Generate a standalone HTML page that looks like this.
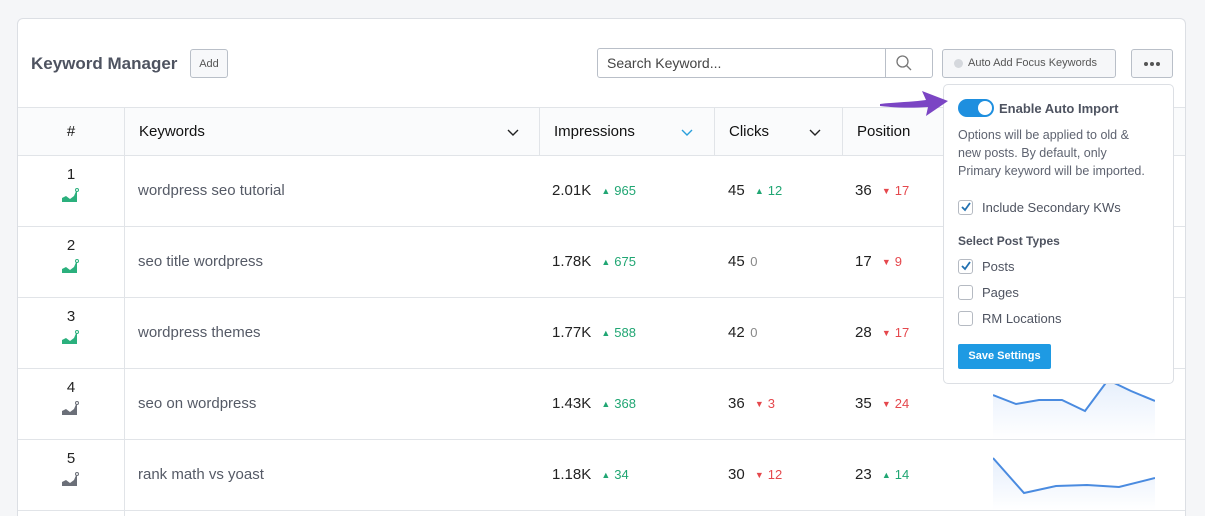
<!DOCTYPE html>
<html style="width:1205px;height:516px;overflow:hidden"><head><style>
*{box-sizing:border-box;margin:0;padding:0}
body{width:1205px;height:516px;overflow:hidden;background:#f5f6f8;font-family:"Liberation Sans",sans-serif;position:relative;color:#222}
.card{position:absolute;left:17px;top:18px;width:1169px;height:498px;background:#fff;border:1px solid #dcdfe4;border-bottom:none;border-radius:6px 6px 0 0;overflow:hidden}
.a{position:absolute}
.hl{position:absolute;left:0;right:0;height:1px;background:#e1e4e8}
.vl{position:absolute;width:1px;background:#e1e4e8}
.th{position:absolute;height:48px;line-height:48px;font-size:15px;color:#111}
.num{position:absolute;width:106px;text-align:center;font-size:15px;color:#222}
.kw{position:absolute;left:120px;font-size:15px;color:#555a66}
.v{position:absolute;font-size:15px;color:#222}
.up{color:#20a673;font-size:13px;margin-left:6px}
.up i,.dn i{font-style:normal;font-size:9px;margin-right:4px;vertical-align:1px}
.dn{color:#e5484d;font-size:13px;margin-left:6px}
.z{color:#888;font-size:13px;margin-left:2px}
.cb{position:absolute;left:14px;width:15px;height:15px;border:1px solid #b5bac2;border-radius:3px;background:#fff}
.pt{position:absolute;left:38px;font-size:13px;color:#4e5360}
</style></head><body>
<div class="card">
 <div class="a" style="left:13px;top:35px;font-size:17px;font-weight:bold;color:#4e5360">Keyword Manager</div>
 <div class="a" style="left:172px;top:30px;width:38px;height:29px;border:1px solid #b9bfc8;border-radius:3px;background:#f7f8fa;font-size:11px;color:#555;text-align:center;line-height:29px">Add</div>
 <div class="a" style="left:579px;top:29px;width:336px;height:30px;border:1px solid #b9bfc8;border-radius:3px;font-size:14px;color:#444;line-height:28px;padding-left:9px">Search Keyword...</div>
 <div class="vl" style="left:867px;top:30px;height:28px;background:#b9bfc8"></div>
 <svg class="a" style="left:877px;top:35px" width="18" height="18" viewBox="0 0 18 18"><circle cx="7.5" cy="7.5" r="5.5" fill="none" stroke="#777" stroke-width="1.3"/><path d="M11.5 11.5L16 16" stroke="#777" stroke-width="1.3"/></svg>
 <div class="a" style="left:924px;top:30px;width:174px;height:29px;border:1px solid #b9bfc8;border-radius:3px;background:#f6f7f9;font-size:11px;color:#555;line-height:27px;padding-left:25px">Auto Add Focus Keywords</div>
 <div class="a" style="left:936px;top:40px;width:9px;height:9px;border-radius:50%;background:#d5d8dd"></div>
 <div class="a" style="left:1113px;top:30px;width:42px;height:29px;border:1px solid #b9bfc8;border-radius:3px;background:#f6f7f9"></div>
 <div class="a" style="left:1126px;top:43px;width:4px;height:4px;border-radius:50%;background:#555"></div>
 <div class="a" style="left:1132px;top:43px;width:4px;height:4px;border-radius:50%;background:#555"></div>
 <div class="a" style="left:1138px;top:43px;width:4px;height:4px;border-radius:50%;background:#555"></div>

 <div class="a" style="left:0;right:0;top:89px;height:47px;background:#fafbfc"></div>
 <div class="hl" style="top:88px"></div><div class="hl" style="top:136px"></div>
 <div class="hl" style="top:207px"></div><div class="hl" style="top:278px"></div><div class="hl" style="top:349px"></div><div class="hl" style="top:420px"></div><div class="hl" style="top:491px"></div>
 <div class="vl" style="left:106px;top:88px;height:410px"></div>
 <div class="vl" style="left:521px;top:88px;height:48px"></div>
 <div class="vl" style="left:696px;top:88px;height:48px"></div>
 <div class="vl" style="left:824px;top:88px;height:48px"></div>
 <div class="th" style="left:0;width:106px;text-align:center;top:89px">#</div>
 <div class="th" style="left:121px;top:89px">Keywords</div>
 <div class="th" style="left:536px;top:89px">Impressions</div>
 <div class="th" style="left:711px;top:89px">Clicks</div>
 <div class="th" style="left:839px;top:89px">Position</div>
 <svg class="a" style="left:489px;top:110px" width="12" height="8"><path d="M1 1l5 5 5-5" fill="none" stroke="#222" stroke-width="1.4"/></svg>
 <svg class="a" style="left:663px;top:110px" width="12" height="8"><path d="M1 1l5 5 5-5" fill="none" stroke="#2a9fdc" stroke-width="1.4"/></svg>
 <svg class="a" style="left:791px;top:110px" width="12" height="8"><path d="M1 1l5 5 5-5" fill="none" stroke="#222" stroke-width="1.4"/></svg>

 <div class="num" style="left:0;top:147px">1</div>
 <div class="num" style="left:0;top:218px">2</div>
 <div class="num" style="left:0;top:289px">3</div>
 <div class="num" style="left:0;top:360px">4</div>
 <div class="num" style="left:0;top:431px">5</div>
 <svg class="a" style="left:43px;top:168px" width="18" height="16"><path d="M1 15V11l4-2 4 3 4-3 3-7v13z" fill="#2bb07d"/><circle cx="16" cy="3" r="1.5" fill="#fff" stroke="#2bb07d"/></svg>
 <svg class="a" style="left:43px;top:239px" width="18" height="16"><path d="M1 15V11l4-2 4 3 4-3 3-7v13z" fill="#2bb07d"/><circle cx="16" cy="3" r="1.5" fill="#fff" stroke="#2bb07d"/></svg>
 <svg class="a" style="left:43px;top:310px" width="18" height="16"><path d="M1 15V11l4-2 4 3 4-3 3-7v13z" fill="#2bb07d"/><circle cx="16" cy="3" r="1.5" fill="#fff" stroke="#2bb07d"/></svg>
 <svg class="a" style="left:43px;top:381px" width="18" height="16"><path d="M1 15V11l4-2 4 3 4-3 3-7v13z" fill="#6b6f78"/><circle cx="16" cy="3" r="1.5" fill="#fff" stroke="#6b6f78"/></svg>
 <svg class="a" style="left:43px;top:452px" width="18" height="16"><path d="M1 15V11l4-2 4 3 4-3 3-7v13z" fill="#6b6f78"/><circle cx="16" cy="3" r="1.5" fill="#fff" stroke="#6b6f78"/></svg>
 <div class="kw" style="top:163px">wordpress seo tutorial</div>
 <div class="kw" style="top:234px">seo title wordpress</div>
 <div class="kw" style="top:305px">wordpress themes</div>
 <div class="kw" style="top:376px">seo on wordpress</div>
 <div class="kw" style="top:447px">rank math vs yoast</div>

 <div class="v" style="left:534px;top:163px">2.01K <span class="up"><i>▲</i>965</span></div>
 <div class="v" style="left:534px;top:234px">1.78K <span class="up"><i>▲</i>675</span></div>
 <div class="v" style="left:534px;top:305px">1.77K <span class="up"><i>▲</i>588</span></div>
 <div class="v" style="left:534px;top:376px">1.43K <span class="up"><i>▲</i>368</span></div>
 <div class="v" style="left:534px;top:447px">1.18K <span class="up"><i>▲</i>34</span></div>

 <div class="v" style="left:710px;top:163px">45 <span class="up"><i>▲</i>12</span></div>
 <div class="v" style="left:710px;top:234px">45<span class="z"> 0</span></div>
 <div class="v" style="left:710px;top:305px">42<span class="z"> 0</span></div>
 <div class="v" style="left:710px;top:376px">36 <span class="dn"><i>▼</i>3</span></div>
 <div class="v" style="left:710px;top:447px">30 <span class="dn"><i>▼</i>12</span></div>

 <div class="v" style="left:837px;top:163px">36 <span class="dn"><i>▼</i>17</span></div>
 <div class="v" style="left:837px;top:234px">17 <span class="dn"><i>▼</i>9</span></div>
 <div class="v" style="left:837px;top:305px">28 <span class="dn"><i>▼</i>17</span></div>
 <div class="v" style="left:837px;top:376px">35 <span class="dn"><i>▼</i>24</span></div>
 <div class="v" style="left:837px;top:447px">23 <span class="up"><i>▲</i>14</span></div>

 <svg class="a" style="left:975px;top:360px" width="162" height="60"><defs><linearGradient id="g" x1="0" y1="0" x2="0" y2="1"><stop offset="0" stop-color="#e6effc"/><stop offset="1" stop-color="#fff"/></linearGradient></defs><path d="M0 16L23 25 46 21 69 21 92 32 115 1 138 12 162 22V60H0z" fill="url(#g)"/><path d="M0 16L23 25 46 21 69 21 92 32 115 1 138 12 162 22" fill="none" stroke="#4a8be0" stroke-width="2"/></svg>
 <svg class="a" style="left:975px;top:437px" width="162" height="54"><path d="M0 2L31 37 63 30 94 29 126 31 162 22V54H0z" fill="url(#g)"/><path d="M0 2L31 37 63 30 94 29 126 31 162 22" fill="none" stroke="#4a8be0" stroke-width="2"/></svg>
</div>

<div class="a" style="left:943px;top:84px;width:231px;height:300px;background:#fff;border:1px solid #dcdfe4;border-radius:5px">
 <div class="a" style="left:14px;top:14px;width:36px;height:18px;border-radius:9px;background:#1e8fdf"></div>
 <div class="a" style="left:34px;top:16px;width:14px;height:14px;border-radius:50%;background:#fff"></div>
 <div class="a" style="left:55px;top:16px;font-size:13px;font-weight:bold;color:#4e5360">Enable Auto Import</div>
 <div class="a" style="left:14px;top:41px;width:200px;font-size:12.5px;line-height:18px;color:#5e6370">Options will be applied to old &amp;<br>new posts. By default, only<br>Primary keyword will be imported.</div>
 <div class="cb" style="top:115px"></div><div class="pt" style="top:115px">Include Secondary KWs</div>
 <div class="a" style="left:14px;top:149px;font-size:12px;font-weight:bold;color:#4e5360">Select Post Types</div>
 <div class="cb" style="top:174px"></div><div class="pt" style="top:174px">Posts</div>
 <div class="cb" style="top:200px"></div><div class="pt" style="top:200px">Pages</div>
 <div class="cb" style="top:226px"></div><div class="pt" style="top:226px">RM Locations</div>
 <svg class="a" style="left:15px;top:115px" width="14" height="14"><path d="M3 7l3 3 5-7" fill="none" stroke="#2271b1" stroke-width="1.8"/></svg>
 <svg class="a" style="left:15px;top:174px" width="14" height="14"><path d="M3 7l3 3 5-7" fill="none" stroke="#2271b1" stroke-width="1.8"/></svg>
 <div class="a" style="left:14px;top:259px;width:93px;height:25px;background:#1e9ae3;border-radius:2px;color:#fff;font-size:11px;font-weight:bold;text-align:center;line-height:25px">Save Settings</div>
</div>
<svg class="a" style="left:878px;top:90px" width="72" height="36"><path d="M2 14C20 12 35 12 48 10L44 1 70 11 48 26 50 17C35 18 20 18 2 16z" fill="#7b45c4"/></svg>
</body></html>
